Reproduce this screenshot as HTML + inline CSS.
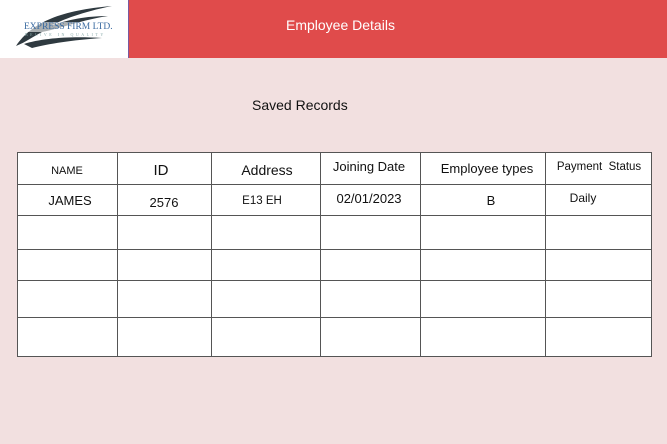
<!DOCTYPE html>
<html><head><meta charset="utf-8"><style>
*{margin:0;padding:0;box-sizing:border-box}
body{width:667px;height:444px;background:#f2e0e0;font-family:"Liberation Sans",sans-serif;position:relative;overflow:hidden}
.abs{position:absolute}
.h{position:absolute;height:1px;background:#555}
.v{position:absolute;width:1px;background:#555}
.t{position:absolute;color:#111;white-space:nowrap;transform:translateX(-50%)}
</style></head><body>
<div class="abs" style="left:0;top:0;width:128px;height:58px;background:#fff"></div>
<div class="abs" style="left:128px;top:0;width:539px;height:58px;background:#e04b4b;border-left:1px solid #7a5aa0"></div>
<svg class="abs" style="left:12px;top:2px" width="104" height="50" viewBox="0 0 104 50">
<path d="M4 44 C20 20 50 8 100 4 C70 10 50 18 38 24 C60 16 80 14 96 14 C70 18 50 26 30 30 C22 34 14 40 4 44Z" fill="#2f3a40"/>
<path d="M12 42 C30 36 60 34 90 36 C60 38 36 42 20 46Z" fill="#2f3a40"/>
</svg>
<div class="abs" style="left:24px;top:22px;font-family:'Liberation Serif',serif;font-size:9.5px;color:#3a6aa0;background:rgba(255,255,255,.6);line-height:10px">EXPRESS FIRM LTD.</div>
<div class="abs" style="left:25px;top:32px;font-family:'Liberation Serif',serif;font-size:4px;color:#8aa;letter-spacing:2.5px">BELIVE IN QUALITY</div>
<div class="abs" style="left:286px;top:17px;color:#fff;font-size:14px">Employee Details</div>
<div class="abs" style="left:252px;top:97px;color:#111;font-size:14px">Saved Records</div>
<div class="abs" style="left:17px;top:152px;width:635px;height:205px;background:#fff;border:1px solid #555"></div>
<div class="h" style="left:17px;width:635px;top:184px"></div>
<div class="h" style="left:17px;width:635px;top:215px"></div>
<div class="h" style="left:17px;width:635px;top:249px"></div>
<div class="h" style="left:17px;width:635px;top:280px"></div>
<div class="h" style="left:17px;width:635px;top:317px"></div>
<div class="v" style="left:117px;top:152px;height:205px"></div>
<div class="v" style="left:211px;top:152px;height:205px"></div>
<div class="v" style="left:320px;top:152px;height:205px"></div>
<div class="v" style="left:420px;top:152px;height:205px"></div>
<div class="v" style="left:545px;top:152px;height:205px"></div>
<div class="t" style="left:67px;top:165px;font-size:11px">NAME</div>
<div class="t" style="left:161px;top:162px;font-size:15px">ID</div>
<div class="t" style="left:267px;top:162px;font-size:14px">Address</div>
<div class="t" style="left:369px;top:159px;font-size:13px">Joining Date</div>
<div class="t" style="left:487px;top:161px;font-size:13px">Employee types</div>
<div class="t" style="left:599px;top:161px;font-size:11.5px">Payment&nbsp; Status</div>
<div class="t" style="left:70px;top:193px;font-size:13px">JAMES</div>
<div class="t" style="left:164px;top:195px;font-size:13px">2576</div>
<div class="t" style="left:262px;top:195px;font-size:11.5px">E13 EH</div>
<div class="t" style="left:369px;top:191px;font-size:13px">02/01/2023</div>
<div class="t" style="left:491px;top:193px;font-size:13px">B</div>
<div class="t" style="left:583px;top:191px;font-size:12px">Daily</div>
</body></html>
